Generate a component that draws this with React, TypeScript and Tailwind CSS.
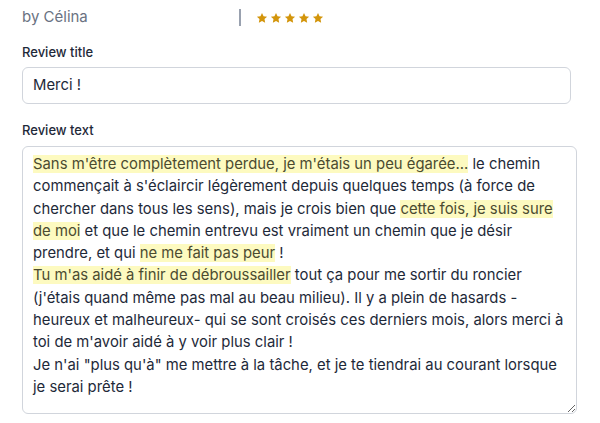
import React from 'react'

const Star = () => (
  <svg viewBox="0 0 24 24" className="w-[12px] h-[12px]" fill="#d3950b">
    <path d="M12 1.8l3.1 6.6 7.1.9-5.2 4.9 1.3 7.1L12 17.8l-6.3 3.5 1.3-7.1L1.8 9.3l7.1-.9z" />
  </svg>
)

const Hl = ({ children }: { children: React.ReactNode }) => (
  <mark className="bg-[#fdfac0] text-[#4b4b30]">{children}</mark>
)

const App = () => {
  return (
    <div className="bg-white w-[600px] h-[423px] overflow-hidden px-[22px] font-['Inter',sans-serif]">
      <div className="flex items-center pt-[6px] h-[28px]">
        <span className="w-[217px] text-[15px] text-gray-500 leading-[22px]">by Célina</span>
        <div className="w-[2px] h-[17px] bg-gray-400 mt-[1px]" />
        <div className="flex gap-[2px] ml-[15px] mt-[1px]">
          <Star />
          <Star />
          <Star />
          <Star />
          <Star />
        </div>
      </div>

      <label className="block mt-[15px] text-[13px] leading-[18px] font-medium text-gray-800">
        Review title
      </label>
      <div className="mt-[6px] w-[549px] h-[37px] border border-gray-300 rounded-md flex items-center px-[10px] text-[14.85px] text-gray-800">
        Merci !
      </div>

      <label className="block mt-[17px] text-[13px] leading-[18px] font-medium text-gray-800">
        Review text
      </label>
      <div className="mt-[7px] w-[555px] h-[268px] border border-gray-300 rounded-md pl-[10px] pr-[10px] pt-[6px] text-[14.85px] leading-[22.3px] text-gray-800 resize overflow-auto">
        <Hl>Sans m'être complètement perdue, je m'étais un peu égarée...</Hl> le chemin
        commençait à s'éclaircir légèrement depuis quelques temps (à force de
        chercher dans tous les sens), mais je crois bien que <Hl>cette fois, je suis sure
        de moi</Hl> et que le chemin entrevu est vraiment un chemin que je désir
        prendre, et qui <Hl>ne me fait pas peur</Hl> !
        <br />
        <Hl>Tu m'as aidé à finir de débroussailler</Hl> tout ça pour me sortir du roncier
        (j'étais quand même pas mal au beau milieu). Il y a plein de hasards -
        heureux et malheureux- qui se sont croisés ces derniers mois, alors merci à
        toi de m'avoir aidé à y voir plus clair !
        <br />
        Je n'ai "plus qu'à" me mettre à la tâche, et je te tiendrai au courant lorsque
        je serai prête !
      </div>
    </div>
  )
}

export default App
